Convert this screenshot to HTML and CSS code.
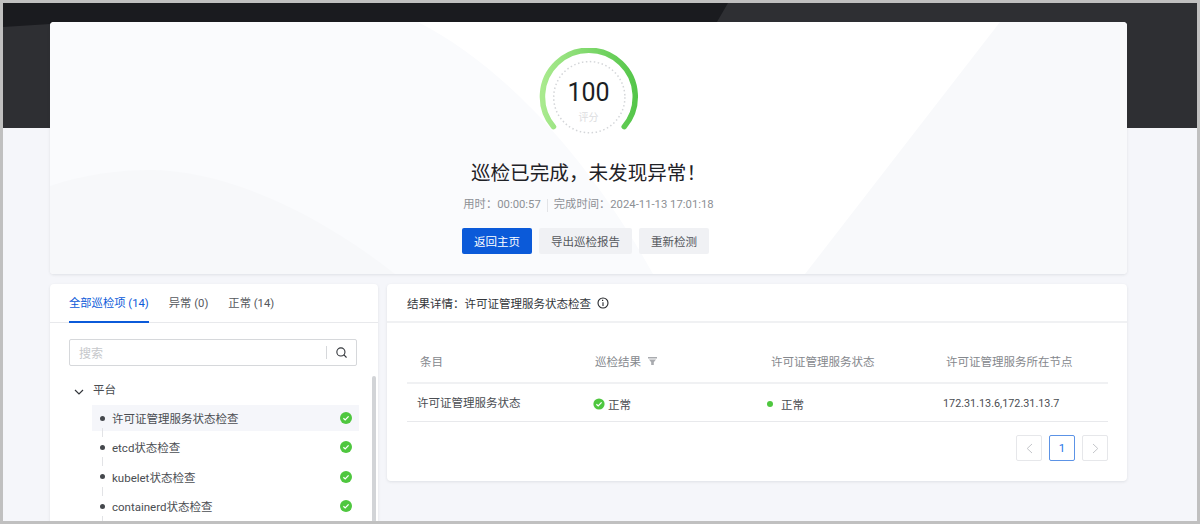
FILE: index.html
```html
<!DOCTYPE html>
<html lang="en">
<head>
    <meta charset="UTF-8">
    <title>巡检结果</title>
    <link rel="stylesheet" href="styles.css">
</head>
<body>
    <div class="frame">
        <div class="page-bg">
            <svg class="bg-shape" viewBox="0 0 1194 125" preserveAspectRatio="none">
                <polygon points="0,0 725,0 690,60 47,21 0,24" fill="#1a1b1f"/>
            </svg>
        </div>

        <div class="page">
            <section class="summary card">
                <svg class="summary-shape" viewBox="0 0 1077 252" preserveAspectRatio="none">
                    <path d="M0,0 L368,0 C450,42 535,130 603,252 L0,252 Z" fill="#fafbfd"/>
                    <path d="M0,164 C35,152 70,148 100,148 C170,148 260,185 345,252 L0,252 Z" fill="#f7f8fa"/>
                    <polygon points="950,0 1077,0 1077,252 755,252" fill="#f8f9fb"/>
                </svg>
                <div class="summary-body">
                    <div class="gauge">
                        <svg width="100" height="90" viewBox="0 0 100 90">
                            <defs>
                                <linearGradient id="gaugeGrad" x1="0" y1="0" x2="1" y2="0">
                                    <stop offset="0" stop-color="#a9ea8e"/>
                                    <stop offset="1" stop-color="#55c64a"/>
                                </linearGradient>
                            </defs>
                            <path d="M14.5 78.7 A46.4 46.4 0 1 1 85.2 78.7" fill="none" stroke="url(#gaugeGrad)" stroke-width="5.5" stroke-linecap="round"/>
                            <circle cx="50.3" cy="49.2" r="35.6" fill="none" stroke="#d4d6d9" stroke-width="1.5" stroke-dasharray="1.5 2.5"/>
                        </svg>
                        <div class="gauge-num">100</div>
                        <div class="gauge-label">评分</div>
                    </div>
                    <h1 class="summary-title">巡检已完成，未发现异常！</h1>
                    <div class="summary-meta">
                        <span>用时：00:00:57</span>
                        <i class="meta-sep"></i>
                        <span>完成时间：2024-11-13 17:01:18</span>
                    </div>
                    <div class="summary-actions">
                        <button class="btn btn-primary">返回主页</button>
                        <button class="btn">导出巡检报告</button>
                        <button class="btn">重新检测</button>
                    </div>
                </div>
            </section>

            <div class="lower">
                <section class="side card">
                    <div class="tabs">
                        <div class="tab active">全部巡检项 (14)</div>
                        <div class="tab">异常 (0)</div>
                        <div class="tab">正常 (14)</div>
                    </div>
                    <div class="side-body">
                        <div class="search">
                            <span class="search-text">搜索</span>
                            <span class="search-btn">
                                <svg width="11" height="11" viewBox="0 0 13 13" fill="none" stroke="#33363b" stroke-width="1.3" stroke-linecap="round">
                                    <circle cx="5.8" cy="5.8" r="4.8"/>
                                    <path d="M9.4 9.4l2.7 2.7"/>
                                </svg>
                            </span>
                        </div>
                        <div class="tree-wrap">
                            <div class="tree">
                                <div class="group">
                                    <svg class="caret" width="10" height="6" viewBox="0 0 10 6" fill="none" stroke="#33363b" stroke-width="1.2">
                                        <path d="M1 1l4 4 4-4"/>
                                    </svg>
                                    平台
                                </div>
                                <div class="item selected">
                                    <span class="dot"></span>
                                    <span class="item-name">许可证管理服务状态检查</span>
                                    <svg class="ok" width="12" height="12" viewBox="0 0 12 12"><circle cx="6" cy="6" r="6" fill="#4fc73f"/><path d="M3.4 6.2l1.8 1.7 3.4-3.5" fill="none" stroke="#fff" stroke-width="1.3"/></svg>
                                </div>
                                <div class="item">
                                    <span class="dot"></span>
                                    <span class="item-name">etcd状态检查</span>
                                    <svg class="ok" width="12" height="12" viewBox="0 0 12 12"><circle cx="6" cy="6" r="6" fill="#4fc73f"/><path d="M3.4 6.2l1.8 1.7 3.4-3.5" fill="none" stroke="#fff" stroke-width="1.3"/></svg>
                                </div>
                                <div class="item">
                                    <span class="dot"></span>
                                    <span class="item-name">kubelet状态检查</span>
                                    <svg class="ok" width="12" height="12" viewBox="0 0 12 12"><circle cx="6" cy="6" r="6" fill="#4fc73f"/><path d="M3.4 6.2l1.8 1.7 3.4-3.5" fill="none" stroke="#fff" stroke-width="1.3"/></svg>
                                </div>
                                <div class="item">
                                    <span class="dot"></span>
                                    <span class="item-name">containerd状态检查</span>
                                    <svg class="ok" width="12" height="12" viewBox="0 0 12 12"><circle cx="6" cy="6" r="6" fill="#4fc73f"/><path d="M3.4 6.2l1.8 1.7 3.4-3.5" fill="none" stroke="#fff" stroke-width="1.3"/></svg>
                                </div>
                            </div>
                            <div class="scrollbar"></div>
                        </div>
                    </div>
                </section>

                <section class="detail card">
                    <div class="detail-head">
                        结果详情：许可证管理服务状态检查
                        <svg width="12" height="12" viewBox="0 0 12 12" fill="none" stroke="#26282c" stroke-width="1.1">
                            <circle cx="6" cy="6" r="5"/>
                            <path d="M6 5.2V9M5 3.4h1.2"/>
                        </svg>
                    </div>
                    <div class="detail-body">
                        <div class="row head-row">
                            <div class="col col-1">条目</div>
                            <div class="col col-2">巡检结果
                                <svg width="9" height="8" viewBox="0 0 9 8"><path d="M0 0h9v1.6H0zM1 2.4h7L5.8 5.2V8H3.2V5.2z" fill="#a9abaf"/></svg>
                            </div>
                            <div class="col col-3">许可证管理服务状态</div>
                            <div class="col col-4">许可证管理服务所在节点</div>
                        </div>
                        <div class="row data-row">
                            <div class="col col-1">许可证管理服务状态</div>
                            <div class="col col-2">
                                <svg width="12" height="12" viewBox="0 0 12 12"><circle cx="6" cy="6" r="5.6" fill="#4fc73f"/><path d="M3.4 6.2l1.8 1.7 3.4-3.5" fill="none" stroke="#fff" stroke-width="1.3"/></svg>
                                正常
                            </div>
                            <div class="col col-3"><span class="status-dot"></span>正常</div>
                            <div class="col col-4">172.31.13.6,172.31.13.7</div>
                        </div>
                        <div class="pager">
                            <span class="page-btn">
                                <svg width="7" height="11" viewBox="0 0 7 11" fill="none" stroke="#c4c6ca" stroke-width="1"><path d="M6 1L1.2 5.5 6 10"/></svg>
                            </span>
                            <span class="page-btn current">1</span>
                            <span class="page-btn">
                                <svg width="7" height="11" viewBox="0 0 7 11" fill="none" stroke="#c4c6ca" stroke-width="1"><path d="M1 1l4.8 4.5L1 10"/></svg>
                            </span>
                        </div>
                    </div>
                </section>
            </div>
        </div>
    </div>
</body>
</html>
```

FILE: styles.css
```css
* {
    margin: 0;
    padding: 0;
    box-sizing: border-box;
}

html, body {
    height: 100%;
    overflow: hidden;
}

body {
    font-family: Roboto, "Noto Sans CJK SC", sans-serif;
    font-size: 11.5px;
    color: #4a4d52;
    background-color: #c0c0c0;
    padding: 3px;
}

.frame {
    position: relative;
    height: 518px;
    overflow: hidden;
    background-color: #f5f6fa;
}

.page-bg {
    position: absolute;
    top: 0;
    left: 0;
    right: 0;
    height: 125px;
    background-color: #2e2f33;
}

.bg-shape {
    display: block;
    width: 100%;
    height: 100%;
}

.page {
    position: relative;
    padding: 19px 70px 0 47px;
}

.card {
    background-color: #fff;
    border-radius: 4px;
    box-shadow: 0 1px 3px rgba(30, 35, 50, 0.1);
}

.summary {
    position: relative;
    height: 252px;
    overflow: hidden;
}

.summary-shape {
    position: absolute;
    top: 0;
    left: 0;
    width: 100%;
    height: 100%;
}

.summary-body {
    position: relative;
    display: flex;
    flex-direction: column;
    align-items: center;
    padding-top: 26px;
}

.gauge {
    position: relative;
    width: 100px;
    height: 90px;
}

.gauge svg {
    display: block;
}

.gauge-num {
    position: absolute;
    top: 27px;
    left: 0;
    width: 100%;
    text-align: center;
    font-size: 25px;
    line-height: 36px;
    color: #1c1f24;
}

.gauge-label {
    position: absolute;
    top: 63px;
    left: 0;
    width: 100%;
    text-align: center;
    font-size: 10px;
    line-height: 14px;
    color: #dcdde0;
}

.summary-title {
    margin-top: 21px;
    font-size: 19.6px;
    line-height: 30px;
    font-weight: 400;
    color: #1f2227;
}

.summary-meta {
    display: flex;
    align-items: center;
    gap: 6px;
    margin-top: 7px;
    font-size: 11.3px;
    line-height: 18px;
    color: #8d9095;
}

.meta-sep {
    width: 1px;
    height: 13px;
    background-color: #e3e4e7;
}

.summary-actions {
    display: flex;
    gap: 7px;
    margin-top: 14px;
    margin-right: 6px;
}

.btn {
    height: 26px;
    padding: 0 12px;
    border: none;
    border-radius: 2px;
    background-color: #f0f1f4;
    color: #55585d;
    font-family: inherit;
    font-size: 11.5px;
}

.btn-primary {
    background-color: #0b5ad9;
    color: #fff;
}

.lower {
    display: flex;
    gap: 9px;
    margin-top: 10px;
    align-items: flex-start;
}

.side {
    width: 328px;
    height: 300px;
}

.tabs {
    display: flex;
    gap: 20px;
    height: 39px;
    padding-left: 19px;
    border-bottom: 1px solid #e8e9ec;
}

.tab {
    height: 39px;
    line-height: 40px;
    font-size: 11.3px;
    color: #55585d;
}

.tab.active {
    color: #0b5ad9;
    border-bottom: 2px solid #0b5ad9;
}

.side-body {
    padding: 16px 0 0 19px;
}

.search {
    display: flex;
    align-items: center;
    justify-content: space-between;
    width: 288px;
    height: 27px;
    border: 1px solid #d6d8db;
    border-radius: 2px;
}

.search-text {
    padding-left: 9px;
    font-size: 12px;
    color: #c6c8cb;
}

.search-btn {
    display: flex;
    align-items: center;
    justify-content: center;
    width: 30px;
    height: 13px;
    border-left: 1px solid #d6d8db;
}

.tree-wrap {
    position: relative;
    padding-top: 10px;
}

.group {
    display: flex;
    align-items: center;
    height: 26px;
    margin-bottom: 3px;
    padding-left: 5px;
}

.caret {
    margin-right: 9px;
    margin-top: 6px;
}

.item {
    position: relative;
    display: flex;
    align-items: center;
    width: 267px;
    height: 26px;
    margin-left: 23px;
    margin-bottom: 3.4px;
    padding-left: 20px;
}

.item.selected {
    background-color: #f5f6fa;
}

.dot {
    position: absolute;
    left: 7.5px;
    top: 10.5px;
    width: 5px;
    height: 5px;
    border-radius: 50%;
    background-color: #45484d;
}

.item::after {
    content: "";
    position: absolute;
    left: 9.5px;
    top: 23px;
    width: 1px;
    height: 9px;
    background-color: #e2e3e6;
}

.item-name {
    flex: 1;
}

.ok {
    margin-right: 7px;
}

.scrollbar {
    position: absolute;
    top: 10px;
    right: 2px;
    width: 4px;
    height: 200px;
    background-color: #d2d4d7;
    border-radius: 2px 2px 0 0;
}

.detail {
    flex: 1;
    height: 197px;
}

.detail-head {
    display: flex;
    align-items: center;
    gap: 6px;
    height: 39px;
    padding-left: 20px;
    border-bottom: 2px solid #f0f1f3;
    color: #33363b;
}

.detail-body {
    padding: 20px 19px 0 20px;
}

.row {
    display: flex;
    align-items: center;
}

.head-row {
    height: 41px;
    padding-bottom: 3px;
    border-bottom: 2px solid #f0f1f3;
    color: #85888d;
}

.data-row {
    height: 38px;
    border-bottom: 1px solid #e8e9ec;
}

.col {
    display: flex;
    align-items: center;
}

.col-1 {
    width: 176px;
}

.col-2 {
    width: 176px;
}

.col-3 {
    width: 175px;
}

.head-row .col-1 {
    padding-left: 13px;
}

.head-row .col-2 {
    gap: 7px;
    padding-left: 12px;
}

.head-row .col-3,
.head-row .col-4 {
    padding-left: 12px;
}

.data-row .col-1 {
    padding-bottom: 1px;
    padding-left: 10px;
}

.data-row .col-2 {
    gap: 3px;
    padding-top: 3px;
    padding-left: 10px;
}

.data-row .col-3 {
    padding-top: 3px;
    padding-left: 8px;
}

.data-row .col-4 {
    padding-top: 1px;
    padding-left: 9px;
    font-size: 10.8px;
}

.status-dot {
    width: 6px;
    height: 6px;
    margin-right: 8px;
    border-radius: 50%;
    background-color: #4fc73f;
}

.pager {
    display: flex;
    justify-content: flex-end;
    gap: 7px;
    margin-top: 13px;
}

.page-btn {
    display: flex;
    align-items: center;
    justify-content: center;
    width: 26px;
    height: 26px;
    border: 1px solid #e6e7ea;
    border-radius: 2px;
}

.page-btn.current {
    border-color: #5c93e6;
    color: #1f74e8;
}
```
